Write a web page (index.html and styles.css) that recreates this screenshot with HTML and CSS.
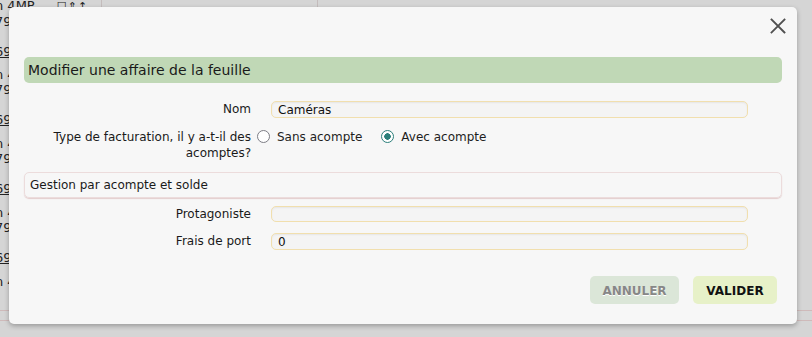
FILE: index.html
```html
<!DOCTYPE html>
<html lang="fr">
<head>
<meta charset="utf-8">
<title>Modifier une affaire</title>
<link rel="stylesheet" href="styles.css">
</head>
<body>
<div class="page">
  <div class="sheet">
    <div class="col col-a">
      <div class="item"><div class="l1">n 4MP <span class="icons">☐⇕↑</span></div><div class="l2">79</div><div class="l3">69</div></div>
      <div class="item"><div class="l1">n 4</div><div class="l2">79</div><div class="l3">69</div></div>
      <div class="item"><div class="l1">n 4</div><div class="l2">79</div><div class="l3">69</div></div>
      <div class="item"><div class="l1">n 4</div><div class="l2">79</div><div class="l3">69</div></div>
      <div class="item"><div class="l1">n 4</div></div>
    </div>
    <div class="col col-b"></div>
    <div class="col col-c"></div>
  </div>
  <div class="foot-line"></div>
  <div class="foot-line"></div>
</div>

<div class="dialog">
  <button class="close" aria-label="Fermer">
    <svg width="16" height="16" viewBox="0 0 16 16"><path d="M1.5 1.5 L14.5 14.5 M14.5 1.5 L1.5 14.5" stroke="#505050" stroke-width="1.8" fill="none" stroke-linecap="square"/></svg>
  </button>
  <div class="title">Modifier une affaire de la feuille</div>

  <div class="row row-nom">
    <label class="lbl">Nom</label>
    <div class="field"><div class="input">Caméras</div></div>
  </div>

  <div class="row row-type">
    <label class="lbl">Type de facturation, il y a-t-il des acomptes?</label>
    <div class="field radios">
      <span class="radio"></span><span class="rtext">Sans acompte</span>
      <span class="radio checked"></span><span class="rtext">Avec acompte</span>
    </div>
  </div>

  <div class="section">Gestion par acompte et solde</div>

  <div class="row row-prot">
    <label class="lbl">Protagoniste</label>
    <div class="field"><div class="input"></div></div>
  </div>

  <div class="row row-frais">
    <label class="lbl">Frais de port</label>
    <div class="field"><div class="input">0</div></div>
  </div>

  <div class="actions">
    <button class="btn btn-cancel">ANNULER</button>
    <button class="btn btn-ok">VALIDER</button>
  </div>
</div>
</body>
</html>
```

FILE: styles.css
```css
html, body {
  margin: 0;
  padding: 0;
}
body {
  width: 812px;
  height: 337px;
  overflow: hidden;
  background: #d5d5d5;
  font-family: "DejaVu Sans", Verdana, sans-serif;
  color: #1e1e1e;
  position: relative;
}

/* background page (behind overlay) */
.page {
  width: 812px;
  height: 337px;
}
.sheet {
  display: flex;
  height: 310px;
}
.col {
  height: 310px;
  overflow: hidden;
}
.col-a {
  width: 101px;
  border-right: 1px solid #c4bcbc;
}
.col-b {
  width: 215px;
  border-right: 1px solid #c4bcbc;
}
.col-c {
  flex: 1;
}
.item {
  height: 69px;
  margin-left: -5px;
  font-size: 13px;
  line-height: 15px;
  color: #222;
}
.item:first-child {
  margin-top: -2px;
}
.l3 {
  margin-top: 15px;
  text-decoration: underline;
}
.icons {
  margin-left: 18px;
  font-size: 11px;
  letter-spacing: 1px;
}
.foot-line {
  height: 9px;
  border-top: 1px solid #cfbaba;
}
.foot-line:first-of-type {
  margin-top: 2px;
}

/* dialog */
.dialog {
  position: absolute;
  left: 9px;
  top: 7px;
  width: 788px;
  height: 317px;
  box-sizing: border-box;
  padding: 50px 15px 0 15px;
  background: #f7f7f7;
  border-radius: 5px;
  box-shadow: 0 2px 5px rgba(0, 0, 0, 0.28);
  font-size: 12px;
}
.close {
  position: absolute;
  right: 11px;
  top: 11px;
  width: 16px;
  height: 16px;
  padding: 0;
  border: 0;
  background: none;
  display: flex;
}
.title {
  height: 26px;
  line-height: 27px;
  padding-left: 4px;
  background: #c0d8b6;
  border-radius: 5px;
  font-size: 14px;
  color: #1a1a1a;
}

.row {
  display: grid;
  grid-template-columns: 227px 1fr;
  column-gap: 4px;
}
.lbl {
  text-align: right;
  line-height: 17px;
  color: #1a1a1a;
}
.field {
  display: flex;
}
.input {
  box-sizing: border-box;
  margin-left: 16px;
  width: 477px;
  height: 17px;
  line-height: 16px;
  padding-left: 6px;
  border: 1px solid #f1dfae;
  border-radius: 5px;
  background: #f4f4f4;
  box-shadow: inset 0 1px 2px rgba(0, 0, 0, 0.06);
  color: #111;
}
.row-nom {
  margin-top: 18px;
}
.row-type {
  margin-top: 11px;
}
.row-type .lbl {
  line-height: 16px;
  padding-left: 20px;
}
.radios {
  align-items: flex-start;
  line-height: 16px;
}
.radio {
  box-sizing: border-box;
  width: 13px;
  height: 13px;
  margin: 1px 0 0 2px;
  border: 1.5px solid #7d7d85;
  border-radius: 50%;
  background: #fff;
  flex: none;
}
.radio.checked {
  border-color: #2b7f7a;
  background: radial-gradient(circle, #2b7f7a 0 3px, #fff 3.5px);
}
.rtext {
  margin-left: 7px;
  margin-right: 17px;
}
.section {
  margin-top: 11px;
  height: 26px;
  box-sizing: border-box;
  line-height: 25px;
  padding-left: 5px;
  border: 1px solid #ecdcdc;
  border-radius: 5px;
  box-shadow: 0 1px 1px #e3cccc;
  color: #1a1a1a;
}
.row-prot {
  margin-top: 8px;
}
.row-prot .input {
  height: 16px;
}
.row-prot .lbl {
  line-height: 16px;
}
.row-frais {
  margin-top: 11px;
}

.actions {
  display: flex;
  justify-content: flex-end;
  gap: 14px;
  margin-top: 26px;
  padding-right: 5px;
}
.btn {
  height: 28px;
  border: 0;
  border-radius: 5px;
  font-family: "DejaVu Sans", Verdana, sans-serif;
  font-size: 12px;
  font-weight: bold;
  padding: 0;
  line-height: 30px;
}
.btn-cancel {
  width: 89px;
  background: #dbe6d8;
  color: #878787;
  text-shadow: 0 1px 0 #ffffff;
}
.btn-ok {
  width: 84px;
  background: #e7f1c8;
  color: #111;
}
```
